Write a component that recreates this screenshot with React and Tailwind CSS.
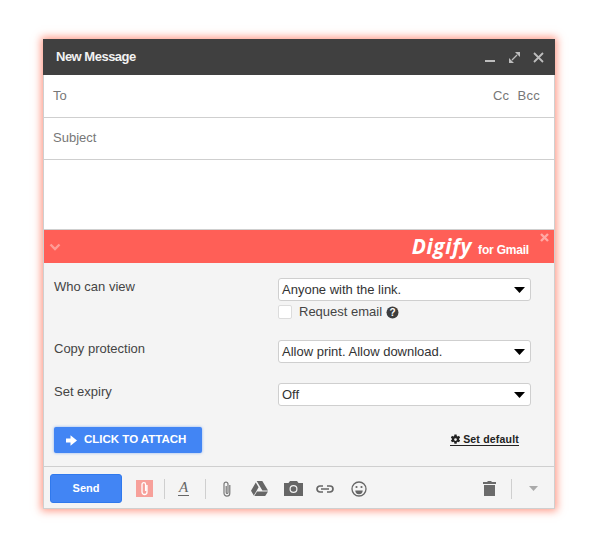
import React from "react";

const Caret = () => (
  <svg width="11" height="6" viewBox="0 0 11 6" className="shrink-0"><path d="M0 0h11L5.5 6z" fill="#000" /></svg>
);

const Select = ({ text, className = "" }) => (
  <div className={`flex items-center justify-between w-[253px] h-[23px] bg-white border border-[#cfcfcf] rounded-[3px] pl-[3px] pr-[5px] text-[13px] leading-none text-[#333] ${className}`}>
    <span>{text}</span>
    <Caret />
  </div>
);

const Sep = ({ className = "" }) => <div className={`w-px h-5 bg-[#cfcfcf] ${className}`} />;

export default function App() {
  return (
    <div className="w-[600px] h-[550px] bg-white pt-[39px] pl-[43px] font-['Liberation_Sans',Arial,sans-serif]">
      <div className="w-[512px] h-[470px] flex flex-col bg-white border-r border-b border-l border-[#cfcfcf] shadow-[0_0_8px_2px_rgba(255,100,70,0.65)]">
        <div className="h-[36px] -mx-px flex items-center justify-between bg-[#404040] pl-[13px] pr-[11px] shrink-0">
          <span className="text-[13px] font-bold text-[#f2f2f2] tracking-[-0.5px]">New Message</span>
          <div className="flex items-center gap-[13px]">
            <svg width="11" height="11" viewBox="0 0 11 11"><rect x="0" y="8" width="10" height="2" fill="#bdbdbd" /></svg>
            <svg width="11" height="11" viewBox="0 0 11 11"><path d="M6 0h5v5zM0 11V6l5 5z" fill="#bdbdbd" /><path d="M8 3L3 8" stroke="#bdbdbd" strokeWidth="1.300" /></svg>
            <svg width="11" height="11" viewBox="0 0 11 11"><path d="M1 1l9 9M10 1l-9 9" stroke="#bdbdbd" strokeWidth="1.800" /></svg>
          </div>
        </div>
        <div className="h-[43px] flex items-center justify-between border-b border-[#cfcfcf] pl-[9px] pr-[14px] pb-px text-[13px] text-[#777] shrink-0">
          <span>To</span>
          <span className="flex gap-[8px] tracking-[0.3px]"><span>Cc</span><span>Bcc</span></span>
        </div>
        <div className="h-[42px] flex items-center border-b border-[#cfcfcf] pl-[9px] pb-[2px] text-[13px] text-[#777] shrink-0">Subject</div>
        <div className="h-[70px] border-b border-[#cfcfcf] shrink-0" />
        <div className="relative h-[33px] flex items-center justify-between bg-[#ff5f57] pl-[5px] pr-[25px] shrink-0">
          <svg width="12" height="8" viewBox="0 0 12 8"><path d="M1.500 1.500L6 6l4.500-4.500" stroke="#ff9c96" strokeWidth="2.400" fill="none" /></svg>
          <div className="flex items-baseline gap-[6px] text-white font-bold italic">
            <span className="text-[21px] leading-none font-['Open_Sans',sans-serif] tracking-[0.6px]">Digify</span>
            <span className="not-italic text-[12px] leading-none tracking-[-0.2px]">for Gmail</span>
          </div>
          <svg className="absolute top-[3px] right-[5px]" width="9" height="9" viewBox="0 0 9 9"><path d="M1 1l7 7M8 1l-7 7" stroke="#ffa9a4" strokeWidth="2.400" /></svg>
        </div>
        <div className="flex-1 flex flex-col bg-[#f4f4f4] text-[#444]">
          <div className="flex pl-[10px] pt-[15px]">
            <div className="w-[224px] text-[13px] leading-none mt-[2px]">Who can view</div>
            <div>
              <Select text="Anyone with the link." />
              <div className="flex items-center mt-[3px] h-[16px] text-[13px]">
                <div className="w-[14px] h-[14px] bg-white border border-[#dcdcdc] rounded-[2px]" />
                <span className="ml-[7px] text-[#444]">Request email</span>
                <svg className="ml-[4px]" width="13" height="13" viewBox="0 0 13 13">
                  <circle cx="6.500" cy="6.500" r="6" fill="#3d3d3d" />
                  <text x="6.500" y="10" textAnchor="middle" fontSize="10" fontWeight="700" fill="#fff">?</text>
                </svg>
              </div>
            </div>
          </div>
          <div className="flex pl-[10px] pt-[20px]">
            <div className="w-[224px] text-[13px] leading-none mt-[2px]">Copy protection</div>
            <Select text="Allow print. Allow download." />
          </div>
          <div className="flex pl-[10px] pt-[20px]">
            <div className="w-[224px] text-[13px] leading-none mt-[2px]">Set expiry</div>
            <Select text="Off" />
          </div>
          <div className="flex items-center justify-between pl-[10px] pr-[35px] mt-[21px]">
            <div className="flex items-center gap-[7px] w-[148px] h-[26px] pl-[12px] bg-[#4285f4] rounded-[2px] shadow-[0_0_3px_rgba(66,133,244,0.6)] text-white text-[11.500px] font-bold">
              <svg width="11" height="11" viewBox="0 0 11 11"><path d="M0 3.500h4.500V0.200L11 5.500 4.500 10.800V7.500H0z" fill="#fff" /></svg>
              <span>CLICK TO ATTACH</span>
            </div>
            <div className="flex items-center gap-[2px] border-b border-[#222] text-[10.500px] font-bold leading-[11px] text-[#222] tracking-[0.2px]">
              <svg width="11" height="11" viewBox="0 0 24 24"><path fill="#222" fillRule="evenodd" d="M12 9a3 3 0 100 6 3 3 0 000-6zM9.600 1h4.800l.5 3.200 1.800 1 3-1.200 2.400 4.100-2.500 2a7 7 0 010 1.800l2.500 2-2.400 4.100-3-1.200-1.800 1-.5 3.200H9.600l-.5-3.200-1.800-1-3 1.200-2.400-4.100 2.500-2a7 7 0 010-1.800l-2.500-2L4.300 4l3 1.200 1.800-1z" /></svg>
              <span>Set default</span>
            </div>
          </div>
        </div>
        <div className="h-[42px] flex items-center border-t border-[#cfcfcf] bg-[#f4f4f4] pl-[6px] pt-[2px] shrink-0">
          <div className="flex items-center justify-center w-[72px] h-[29px] bg-[#4285f4] border border-[#3079ed] rounded-[3px] text-white text-[11px] font-bold">Send</div>
          <div className="ml-[14px] flex items-center justify-center w-[17px] h-[17px] bg-[#f7a09a]">
            <svg width="9" height="15" viewBox="0 0 9 15"><path d="M7 4v7a2.500 2.500 0 01-5 0V3.500a1.800 1.800 0 013.600 0V10" stroke="#fff" strokeWidth="1.300" fill="none" /></svg>
          </div>
          <Sep className="ml-[11px]" />
          <div className="ml-[13px] flex flex-col items-center w-[11px]">
            <span className="font-['Liberation_Serif',serif] italic text-[15px] leading-[13px] text-[#666]">A</span>
            <div className="w-[11px] h-px bg-[#666] mt-px" />
          </div>
          <Sep className="ml-[16px]" />
          <svg className="ml-[16px]" width="10" height="16" viewBox="0 0 10 16"><path d="M7.800 4v8.200a2.900 2.900 0 01-5.800 0V3.200a2 2 0 014 0v8.400a.9.9 0 01-1.800 0V5" stroke="#777" strokeWidth="1.200" fill="none" /></svg>
          <svg className="ml-[19px]" width="17" height="15" viewBox="0 0 17 15"><path d="M5.700 0h5.600l5.700 9.500H11.400zM4.800 1.500L7.600 6.300 2.800 14.500 0 9.700zM6 10.500h11L14.200 15H3.300z" fill="#666" /></svg>
          <svg className="ml-[16px]" width="19" height="15" viewBox="0 0 19 15"><path fillRule="evenodd" d="M0 2h4.500L6 0h7l1.500 2H19v13H0zM9.500 4a4 4 0 100 8 4 4 0 000-8zM9.500 5.200a2.800 2.800 0 110 5.600 2.800 2.800 0 010-5.600z" fill="#666" /></svg>
          <svg className="ml-[13px]" width="18" height="8" viewBox="0 0 18 8"><path d="M7 1H4a3 3 0 000 6h3M11 1h3a3 3 0 010 6h-3M5 4h8" stroke="#666" strokeWidth="1.700" fill="none" /></svg>
          <svg className="ml-[17px]" width="16" height="16" viewBox="0 0 16 16"><circle cx="8" cy="8" r="7" stroke="#666" strokeWidth="1.300" fill="none" /><circle cx="5.500" cy="6" r="1.100" fill="#666" /><circle cx="10.500" cy="6" r="1.100" fill="#666" /><path d="M4.300 9.500h7.400a3.700 3.700 0 01-7.400 0z" fill="#666" /></svg>
          <svg className="ml-[116px]" width="13" height="15" viewBox="0 0 13 15"><path d="M4.500 0h4v1H13v2H0V1h4.500zM1 4h11v11H1z" fill="#6b6b6b" /></svg>
          <Sep className="ml-[15px]" />
          <svg className="ml-[17px]" width="9" height="5" viewBox="0 0 9 5"><path d="M0 0h9L4.500 5z" fill="#aaa" /></svg>
        </div>
      </div>
    </div>
  );
}
